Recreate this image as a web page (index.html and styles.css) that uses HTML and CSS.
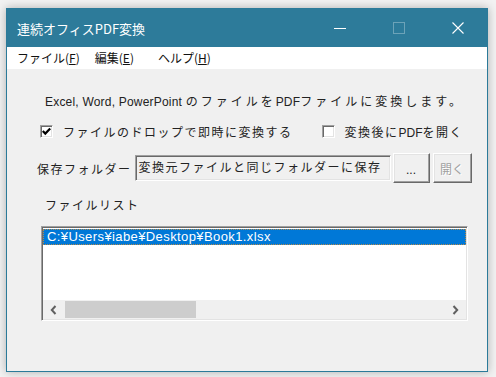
FILE: index.html
```html
<!DOCTYPE html>
<html lang="ja">
<head>
<meta charset="utf-8">
<title>連続オフィスPDF変換</title>
<link rel="stylesheet" href="styles.css">
</head>
<body>
<div class="window">
  <div class="titlebar">
    <div class="title">連続オフィスPDF変換</div>
    <div class="caption-buttons">
      <div class="cap-btn"><svg width="12" height="12" viewBox="0 0 12 12"><path d="M0 6.5H12" stroke="#fff" stroke-width="1"/></svg></div>
      <div class="cap-btn"><svg width="12" height="12" viewBox="0 0 12 12"><rect x="0.5" y="0.5" width="11" height="11" fill="none" stroke="rgba(255,255,255,0.3)" stroke-width="1"/></svg></div>
      <div class="cap-btn"><svg width="12" height="12" viewBox="0 0 12 12"><path d="M0.5 0.5L11.5 11.5M11.5 0.5L0.5 11.5" stroke="#fff" stroke-width="1.1"/></svg></div>
    </div>
  </div>
  <div class="menubar">
    <span class="menu-item file">ファイル(<u>F</u>)</span>
    <span class="menu-item edit">編集(<u>E</u>)</span>
    <span class="menu-item">ヘルプ(<u>H</u>)</span>
  </div>
  <div class="content">
    <p class="desc"><span class="lat">Excel, Word, PowerPoint </span>のファイルを<span class="lat">PDF</span>ファイルに変換します。</p>
    <div class="check-row">
      <div class="check">
        <span class="box"><svg width="9" height="9" viewBox="0 0 9 9"><path d="M0.8 4L3.3 6.6L8.2 1.6" fill="none" stroke="#000" stroke-width="2.2"/></svg></span>
        <span>ファイルのドロップで即時に変換する</span>
      </div>
      <div class="check second">
        <span class="box"></span>
        <span>変換後に<span class="lat">PDF</span>を開く</span>
      </div>
    </div>
    <div class="folder-row">
      <span class="folder-label">保存フォルダー</span>
      <div class="field">変換元ファイルと同じフォルダーに保存</div>
      <div class="btn browse">...</div>
      <div class="btn open disabled">開く</div>
    </div>
    <div class="list-label">ファイルリスト</div>
    <div class="listbox">
      <div class="list-items">
        <div class="item selected">C:¥Users¥iabe¥Desktop¥Book1.xlsx</div>
      </div>
      <div class="hscroll">
        <div class="arrow"><svg width="7" height="10" viewBox="0 0 7 10"><path d="M5.5 1L1.8 5L5.5 9" fill="none" stroke="#606060" stroke-width="2"/></svg></div>
        <div class="track"><div class="thumb"></div></div>
        <div class="arrow"><svg width="7" height="10" viewBox="0 0 7 10"><path d="M1.5 1L5.2 5L1.5 9" fill="none" stroke="#606060" stroke-width="2"/></svg></div>
      </div>
    </div>
  </div>
</div>
</body>
</html>
```
FILE: styles.css
```css
* { box-sizing: border-box; }
html, body { margin: 0; }
body {
  width: 496px;
  height: 377px;
  overflow: hidden;
  background: #f2f2f2;
  padding: 8px 0 0 6px;
  font-family: "Noto Sans CJK JP", sans-serif;
}
.window {
  width: 482px;
  height: 364px;
  border: 1px solid #2b7a99;
  box-shadow: 0 0 9px rgba(0, 0, 0, 0.28);
  background: #f0f0f0;
  display: flex;
  flex-direction: column;
}
.titlebar {
  height: 38px;
  flex: none;
  background: #2d7b9a;
  color: #fff;
  display: flex;
  align-items: center;
}
.title {
  flex: 1;
  padding-left: 10px;
  font-size: 13px;
  line-height: 1;
}
.caption-buttons {
  display: flex;
  align-self: stretch;
}
.cap-btn {
  width: 59px;
  display: flex;
  align-items: center;
  justify-content: center;
}
.cap-btn svg { display: block; }
.menubar {
  height: 22px;
  flex: none;
  background: #fff;
  display: flex;
  align-items: center;
  padding-left: 10px;
  font-size: 12px;
  color: #111;
}
.menu-item { line-height: 1; }
.menu-item.file { margin-right: 15px; }
.menu-item.edit { margin-right: 24px; }
.menu-item u { text-underline-offset: 1px; }
.content {
  flex: 1;
  padding: 24px 0 0 30px;
  font-size: 12px;
  letter-spacing: 1.5px;
  color: #222;
}
.lat {
  font-family: "Liberation Sans", sans-serif;
  letter-spacing: 0;
}
.desc {
  margin: 0 0 0 8px;
  height: 16px;
  line-height: 16px;
  white-space: nowrap;
  letter-spacing: 3px;
}
.desc .lat { letter-spacing: 0.2px; }
.check-row {
  display: flex;
  align-items: center;
  height: 16px;
  margin: 14px 0 0 3px;
  white-space: nowrap;
}
.check {
  display: flex;
  align-items: center;
  gap: 10px;
}
.check.second { margin-left: 29px; }
.box {
  width: 13px;
  height: 13px;
  flex: none;
  background: #fff;
  border: 1px solid;
  border-color: #a0a0a0 #fff #fff #a0a0a0;
  box-shadow: inset 1px 1px 0 #696969, inset -1px -1px 0 #e3e3e3;
  display: flex;
  align-items: center;
  justify-content: center;
}
.box svg { display: block; }
.folder-row {
  display: flex;
  align-items: center;
  height: 30px;
  margin-top: 14px;
  white-space: nowrap;
}
.folder-label { margin-right: 3px; }
.field {
  width: 256px;
  height: 26px;
  margin-right: 2px;
  padding-left: 3px;
  line-height: 22px;
  border: 1px solid;
  border-color: #a0a0a0 #fff #fff #a0a0a0;
  box-shadow: inset 1px 1px 0 #696969, inset -1px -1px 0 #e3e3e3;
  background: #f0f0f0;
  overflow: hidden;
}
.btn {
  height: 30px;
  border: 1px solid;
  border-color: #fff #696969 #696969 #fff;
  box-shadow: inset -1px -1px 0 #a0a0a0, inset 1px 1px 0 #e3e3e3;
  background: #f0f0f0;
  display: flex;
  align-items: center;
  justify-content: center;
  letter-spacing: 0;
}
.browse { width: 37px; font-family: "Liberation Sans", sans-serif; padding-top: 4px; }
.open { width: 39px; margin-left: 3px; }
.btn.disabled { color: #a0a0a0; text-shadow: 1px 1px 0 #fff; }
.list-label {
  margin: 14px 0 0 8px;
  height: 16px;
  line-height: 16px;
}
.listbox {
  width: 427px;
  height: 95px;
  margin: 13px 0 0 4px;
  border: 1px solid;
  border-color: #a0a0a0 #fff #fff #a0a0a0;
  box-shadow: inset 1px 1px 0 #696969, inset -1px -1px 0 #e3e3e3;
  background: #fff;
  padding: 1px;
  display: flex;
  flex-direction: column;
}
.list-items { flex: 1; padding-top: 1px; }
.item {
  height: 16px;
  line-height: 14px;
  padding-left: 3px;
  font-family: "Liberation Sans", sans-serif;
  font-size: 13px;
  letter-spacing: 0.4px;
  white-space: nowrap;
}
.item.selected {
  background: #0078d7;
  color: #fff;
  border: 1px dotted #b58a4a;
}
.hscroll {
  height: 19px;
  flex: none;
  background: #f0f0f0;
  display: flex;
}
.arrow {
  width: 21px;
  display: flex;
  align-items: center;
  justify-content: center;
}
.arrow svg { display: block; }
.track { flex: 1; padding: 1px 0; }
.thumb {
  width: 131px;
  height: 17px;
  margin-left: 1px;
  background: #cdcdcd;
}
```
